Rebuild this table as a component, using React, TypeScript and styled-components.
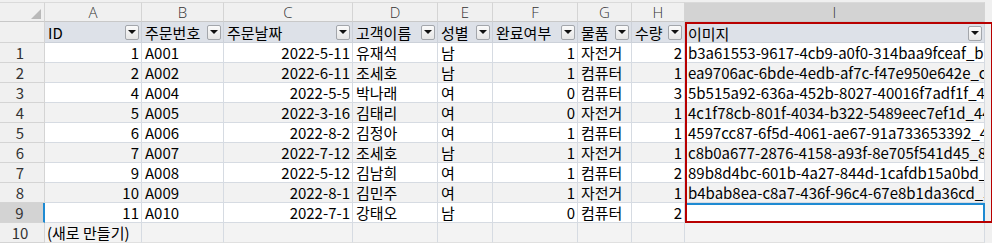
import styled, { createGlobalStyle, css } from "styled-components"

const GlobalStyle = createGlobalStyle`
    html, body {
        margin: 0;
        padding: 0;
        background: #f0f0f0;
        overflow: hidden;
    }
    * {
        box-sizing: border-box;
    }
`

const FONT = `"Noto Sans CJK KR", "Noto Sans", sans-serif`

type Col = {
    letter: string
    title: string
    width: number
    align: "left" | "right"
}

const columns: Col[] = [
    { letter: "A", title: "ID", width: 97, align: "right" },
    { letter: "B", title: "주문번호", width: 82, align: "left" },
    { letter: "C", title: "주문날짜", width: 129, align: "right" },
    { letter: "D", title: "고객이름", width: 85, align: "left" },
    { letter: "E", title: "성별", width: 55, align: "left" },
    { letter: "F", title: "완료여부", width: 85, align: "right" },
    { letter: "G", title: "물품", width: 54, align: "left" },
    { letter: "H", title: "수량", width: 53, align: "right" },
    { letter: "I", title: "이미지", width: 300, align: "left" },
]

const rows: string[][] = [
    ["1", "A001", "2022-5-11", "유재석", "남", "1", "자전거", "2", "b3a61553-9617-4cb9-a0f0-314baa9fceaf_bicycle.jpg"],
    ["2", "A002", "2022-6-11", "조세호", "남", "1", "컴퓨터", "1", "ea9706ac-6bde-4edb-af7c-f47e950e642e_computer.jpg"],
    ["4", "A004", "2022-5-5", "박나래", "여", "0", "컴퓨터", "3", "5b515a92-636a-452b-8027-40016f7adf1f_4444.jpg"],
    ["5", "A005", "2022-3-16", "김태리", "여", "0", "자전거", "1", "4c1f78cb-801f-4034-b322-5489eec7ef1d_4444.jpg"],
    ["6", "A006", "2022-8-2", "김정아", "여", "1", "컴퓨터", "1", "4597cc87-6f5d-4061-ae67-91a733653392_4545.jpg"],
    ["7", "A007", "2022-7-12", "조세호", "남", "1", "자전거", "1", "c8b0a677-2876-4158-a93f-8e705f541d45_8888.jpg"],
    ["9", "A008", "2022-5-12", "김남희", "여", "1", "컴퓨터", "2", "89b8d4bc-601b-4a27-844d-1cafdb15a0bd_5555.jpg"],
    ["10", "A009", "2022-8-1", "김민주", "여", "1", "자전거", "1", "b4bab8ea-c8a7-436f-96c4-67e8b1da36cd_5555.jpg"],
    ["11", "A010", "2022-7-1", "강태오", "남", "0", "컴퓨터", "2", ""],
]

const App: React.FC = () => {
    const template = `45px ${columns.map(c => c.width + "px").join(" ")} 1fr`
    return (
        <>
            <GlobalStyle />
            <Sheet style={{ gridTemplateColumns: template }}>
                <Corner><CornerMark /></Corner>
                {columns.map(c => (
                    <Letter key={c.letter} $selected={c.letter === "I"}>{c.letter}</Letter>
                ))}
                <Filler />

                <RowNum />
                {columns.map(c => (
                    <HeadCell key={c.title} $selected={c.letter === "I"}>
                        <span>{c.title}</span>
                        <DropBtn />
                    </HeadCell>
                ))}
                <Filler />

                {rows.map((r, i) => (
                    <Row key={i} r={r} index={i} />
                ))}

                <RowNum>10</RowNum>
                <NewCell>(새로 만들기)</NewCell>
                {columns.slice(1).map(c => <NewCell key={c.letter} />)}
                <Filler />

                <Highlight />
            </Sheet>
        </>
    )
}

const Row = ({ r, index }: { r: string[]; index: number }) => {
    const last = index === rows.length - 1
    return (
        <>
            <RowNum $selected={last}>{index + 1}</RowNum>
            {r.map((v, j) => (
                <Cell
                    key={j}
                    $align={columns[j].align}
                    $alt={index % 2 === 1}
                    $active={last && j === 8}
                >
                    {v}
                </Cell>
            ))}
            <Filler />
        </>
    )
}

export default App

const Sheet = styled.div`
    display: grid;
    grid-template-rows: 22px 21px repeat(10, 20px);
    width: 992px;
    height: 243px;
    font-family: ${FONT};
    font-size: 15px;
    color: #000;
    background: #f0f0f0;
    position: relative;
`
const Corner = styled.div`
    background: #f0f0f0;
    border-top: 1px solid #dadada;
    margin-top: 2px;
    border-right: 1px solid #d4d4d4;
    border-bottom: 1px solid #c8c8c8;
    display: flex;
    justify-content: flex-end;
    align-items: flex-end;
    padding: 0 3px 2px 0;
`
const CornerMark = styled.div`
    width: 0;
    height: 0;
    border-left: 10px solid transparent;
    border-bottom: 10px solid #b9b9b9;
`
const Letter = styled.div<{ $selected?: boolean }>`
    margin-top: 2px;
    border-top: 1px solid #dadada;
    border-right: 1px solid #d4d4d4;
    border-bottom: 1px solid #c8c8c8;
    background: ${p => (p.$selected ? "#d3d3d3" : "#f0f0f0")};
    color: #333;
    font-family: "Open Sans", "Noto Sans", sans-serif;
    font-weight: 300;
    font-size: 15px;
    display: flex;
    align-items: center;
    justify-content: center;
    line-height: 18px;
`
const Filler = styled.div`
    background: #f0f0f0;
`
const RowNum = styled.div<{ $selected?: boolean }>`
    background: ${p => (p.$selected ? "#d3d3d3" : "#f0f0f0")};
    border-right: ${p => (p.$selected ? "2px solid #1e8ad2" : "1px solid #d4d4d4")};
    border-bottom: 1px solid #d4d4d4;
    color: #333;
    font-size: 15px;
    display: flex;
    align-items: center;
    justify-content: center;
    padding-right: 4px;
    line-height: 19px;
`
const HeadCell = styled.div<{ $selected?: boolean }>`
    background: #dde1e8;
    border-right: 1px solid #ccd1d9;
    border-bottom: 1px solid #ccd1d9;
    ${p => p.$selected && css`border-top: 2px solid #3a93d6;`}
    display: flex;
    align-items: center;
    justify-content: space-between;
    padding: 0 2px 0 3px;
    white-space: nowrap;
    overflow: hidden;
    line-height: 19px;
`
const DropBtn = styled.div`
    flex: none;
    width: 14px;
    height: 15px;
    margin-left: 2px;
    border: 1px solid #a3a6ab;
    border-radius: 2px;
    background: linear-gradient(#fafafa, #e6e6e6);
    display: flex;
    align-items: center;
    justify-content: center;
    &::after {
        content: "";
        width: 0;
        height: 0;
        border-left: 4px solid transparent;
        border-right: 4px solid transparent;
        border-top: 4px solid #111;
    }
`
const Cell = styled.div<{ $align: "left" | "right"; $alt?: boolean; $active?: boolean }>`
    background: ${p => (p.$alt ? "#f2f2f2" : "#ffffff")};
    border-right: 1px solid #d6dbe2;
    border-bottom: 1px solid #d6dbe2;
    text-align: ${p => p.$align};
    padding: ${p => (p.$align === "right" ? "0 2px 0 0" : "0 0 0 3px")};
    white-space: nowrap;
    overflow: hidden;
    line-height: 19px;
    ${p => p.$active && css`
        border: 2px solid #1e8ad2;
        background: #ffffff;
    `}
`
const NewCell = styled.div`
    background: #f3f3f3;
    border-right: 1px solid #d6dbe2;
    border-bottom: 1px solid #e0e0e0;
    padding-left: 2px;
    white-space: nowrap;
    line-height: 19px;
`
/* annotation frame drawn over column I, outside auto-placement */
const Highlight = styled.div`
    position: absolute;
    grid-column: 10;
    grid-row: 2 / 12;
    inset: 0 -1px 0 0;
    border: 2px solid #b80000;
    pointer-events: none;
`
